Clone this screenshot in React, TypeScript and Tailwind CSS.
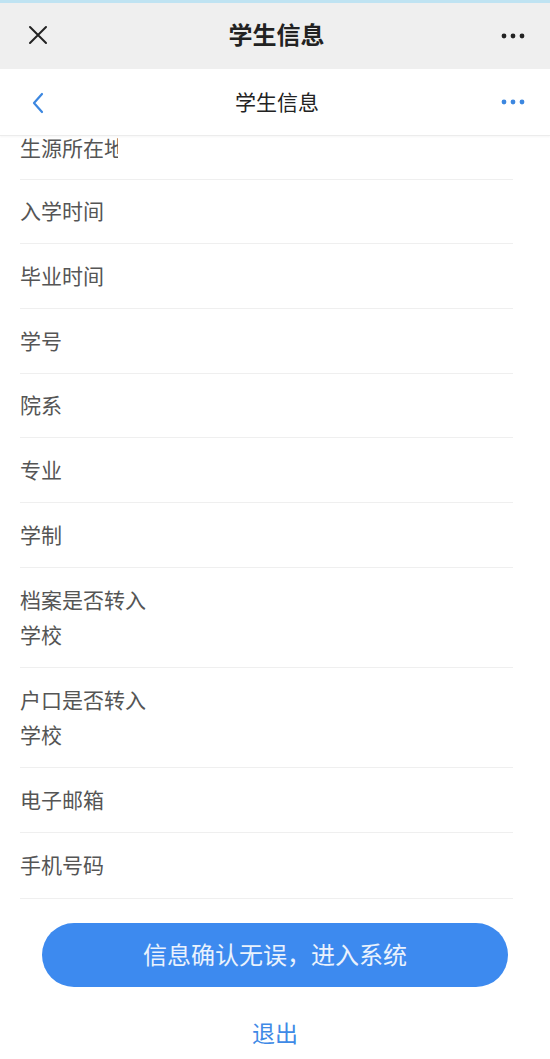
import React from "react";

const font = { fontFamily: '"Noto Sans", "Noto Sans CJK SC", sans-serif' };

const rows: { label: string[]; h: string }[] = [
  { label: ["入学时间"], h: "h-[64px]" },
  { label: ["毕业时间"], h: "h-[65px]" },
  { label: ["学号"], h: "h-[65px]" },
  { label: ["院系"], h: "h-[64px]" },
  { label: ["专业"], h: "h-[65px]" },
  { label: ["学制"], h: "h-[65px]" },
  { label: ["档案是否转入", "学校"], h: "h-[100px]" },
  { label: ["户口是否转入", "学校"], h: "h-[100px]" },
  { label: ["电子邮箱"], h: "h-[65px]" },
  { label: ["手机号码"], h: "h-[66px]" },
];

function Dots({ color }: { color: string }) {
  return (
    <svg width="24" height="6" viewBox="0 0 24 6">
      <circle cx="3" cy="3" r="2.4" fill={color} />
      <circle cx="12" cy="3" r="2.4" fill={color} />
      <circle cx="21" cy="3" r="2.4" fill={color} />
    </svg>
  );
}

export default function App() {
  return (
    <div className="w-[550px] h-[1059px] bg-white overflow-hidden flex flex-col" style={font}>
      {/* system strip */}
      <div className="h-[3px] bg-[#bfe3f2]" />

      {/* webview bar */}
      <div className="h-[66px] bg-[#efefef] flex items-center justify-between pl-[28px] pr-[25px]">
        <svg width="20" height="20" viewBox="0 0 20 20" className="mb-[2px]">
          <path d="M2 2 L18 18 M18 2 L2 18" stroke="#222" strokeWidth="2" strokeLinecap="round" />
        </svg>
        <span className="text-[24px] font-semibold text-[#222] leading-none mb-[2px] pl-[4px]">学生信息</span>
        <Dots color="#222" />
      </div>

      {/* page header */}
      <div className="h-[67px] bg-white flex items-center justify-between pl-[31px] pr-[25px] border-b border-[#ececec] shadow-[0_1px_2px_rgba(0,0,0,0.04)] z-10">
        <svg width="14" height="22" viewBox="0 0 14 22" className="mt-[2px]">
          <path d="M11 2 L3 11 L11 20" stroke="#3c87e0" strokeWidth="2.2" fill="none" strokeLinecap="round" strokeLinejoin="round" />
        </svg>
        <span className="text-[21px] text-[#222] leading-none pl-[8px]">学生信息</span>
        <Dots color="#3c87e0" />
      </div>

      {/* list */}
      <div className="pl-[20px] pr-[37px]">
        <div className="h-[44px] border-b border-[#efefef] overflow-hidden">
          <div className="w-[98px] overflow-hidden whitespace-nowrap text-[21px] text-[#555] leading-[28px] -mt-[2px]">
            生源所在地
          </div>
        </div>
        {rows.map((r, i) => (
          <div
            key={i}
            className={`${r.h} border-b border-[#efefef] flex flex-col justify-center text-[21px] text-[#555] leading-[35px]`}
          >
            {r.label.map((l, j) => (
              <span key={j}>{l}</span>
            ))}
          </div>
        ))}
      </div>

      {/* actions */}
      <div className="flex flex-col items-center pt-[24px]">
        <button className="w-[466px] h-[64px] rounded-full bg-[#3d8aef] text-[#eaf2fd] text-[24px] leading-none">
          信息确认无误，进入系统
        </button>
        <button className="mt-[35px] text-[23px] text-[#3f8ae6] leading-none">退出</button>
      </div>
    </div>
  );
}
